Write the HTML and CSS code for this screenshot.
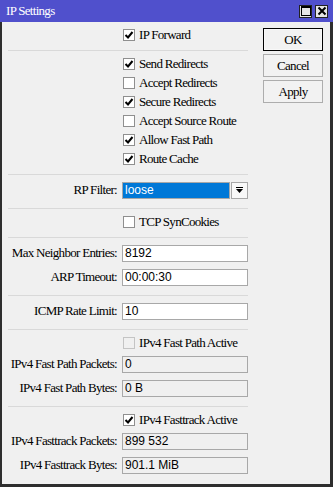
FILE: index.html
```html
<!DOCTYPE html>
<html>
<head>
<meta charset="utf-8">
<link rel="stylesheet" href="styles.css">
</head>
<body>
<div class="window">
  <div class="titlebar">
    <span class="title">IP Settings</span>
    <div class="tb-buttons">
      <span class="tb-btn"><svg width="10" height="10" viewBox="0 0 10 10"><rect x="0.5" y="0.5" width="9" height="9" fill="none" stroke="#000" stroke-width="1"/><rect x="0" y="0" width="10" height="2" fill="#000"/></svg></span>
      <span class="tb-btn"><svg width="10" height="10" viewBox="0 0 10 10"><path d="M1.5 1.5 L8.5 8.5 M8.5 1.5 L1.5 8.5" stroke="#000" stroke-width="2"/></svg></span>
    </div>
  </div>
  <div class="body">
    <div class="form">
      <div class="row cbrow"><span></span><span class="cb"><span class="box"><svg width="10" height="10" viewBox="0 0 10 10"><path d="M1.5 5 L4 7.5 L8.5 2" fill="none" stroke="#000" stroke-width="2"/></svg></span>IP Forward</span></div>
      <div class="sep"></div>
      <div class="row cbrow"><span></span><span class="cb"><span class="box"><svg width="10" height="10" viewBox="0 0 10 10"><path d="M1.5 5 L4 7.5 L8.5 2" fill="none" stroke="#000" stroke-width="2"/></svg></span>Send Redirects</span></div>
      <div class="row cbrow"><span></span><span class="cb"><span class="box"></span>Accept Redirects</span></div>
      <div class="row cbrow"><span></span><span class="cb"><span class="box"><svg width="10" height="10" viewBox="0 0 10 10"><path d="M1.5 5 L4 7.5 L8.5 2" fill="none" stroke="#000" stroke-width="2"/></svg></span>Secure Redirects</span></div>
      <div class="row cbrow"><span></span><span class="cb"><span class="box"></span>Accept Source Route</span></div>
      <div class="row cbrow"><span></span><span class="cb"><span class="box"><svg width="10" height="10" viewBox="0 0 10 10"><path d="M1.5 5 L4 7.5 L8.5 2" fill="none" stroke="#000" stroke-width="2"/></svg></span>Allow Fast Path</span></div>
      <div class="row cbrow"><span></span><span class="cb"><span class="box"><svg width="10" height="10" viewBox="0 0 10 10"><path d="M1.5 5 L4 7.5 L8.5 2" fill="none" stroke="#000" stroke-width="2"/></svg></span>Route Cache</span></div>
      <div class="sep"></div>
      <div class="row frow"><span class="lbl">RP Filter:</span>
        <span class="selectwrap"><span class="select">loose</span><span class="dd"><svg width="9" height="8" viewBox="0 0 9 8"><rect x="1" y="1" width="7" height="1" fill="#000"/><path d="M1 3 L8 3 L4.5 7 Z" fill="#000"/></svg></span></span>
      </div>
      <div class="sep"></div>
      <div class="row cbrow"><span></span><span class="cb"><span class="box"></span>TCP SynCookies</span></div>
      <div class="sep"></div>
      <div class="row frow"><span class="lbl">Max Neighbor Entries:</span><span class="field">8192</span></div>
      <div class="row frow"><span class="lbl">ARP Timeout:</span><span class="field">00:00:30</span></div>
      <div class="sep"></div>
      <div class="row frow"><span class="lbl">ICMP Rate Limit:</span><span class="field">10</span></div>
      <div class="sep"></div>
      <div class="row cbrow"><span></span><span class="cb"><span class="box dis"></span>IPv4 Fast Path Active</span></div>
      <div class="row frow"><span class="lbl">IPv4 Fast Path Packets:</span><span class="field ro">0</span></div>
      <div class="row frow"><span class="lbl">IPv4 Fast Path Bytes:</span><span class="field ro">0 B</span></div>
      <div class="sep"></div>
      <div class="row cbrow"><span></span><span class="cb"><span class="box"><svg width="10" height="10" viewBox="0 0 10 10"><path d="M1.5 5 L4 7.5 L8.5 2" fill="none" stroke="#000" stroke-width="2"/></svg></span>IPv4 Fasttrack Active</span></div>
      <div class="row frow"><span class="lbl">IPv4 Fasttrack Packets:</span><span class="field ro">899 532</span></div>
      <div class="row frow"><span class="lbl">IPv4 Fasttrack Bytes:</span><span class="field ro">901.1 MiB</span></div>
    </div>
    <div class="buttons">
      <span class="btn default">OK</span>
      <span class="btn">Cancel</span>
      <span class="btn">Apply</span>
    </div>
  </div>
</div>
</body>
</html>
```

FILE: styles.css
```css
html, body {
  margin: 0;
  padding: 0;
  background: #f0f0f0;
}
.window {
  width: 333px;
  height: 487px;
  display: flex;
  flex-direction: column;
  font-family: "Liberation Serif", serif;
  font-size: 13px;
  letter-spacing: -0.7px;
  color: #000;
}
.titlebar {
  height: 22px;
  flex: none;
  background: #5050cc;
  display: flex;
  align-items: center;
  justify-content: space-between;
  padding: 0 5px 0 6px;
}
.title {
  color: #fff;
  font-size: 13px;
}
.tb-buttons {
  display: flex;
  gap: 3px;
}
.tb-btn {
  width: 13px;
  height: 13px;
  background: #e6e6e6;
  border: 1px solid #222;
  display: flex;
  align-items: center;
  justify-content: center;
  box-sizing: border-box;
}
.tb-btn svg { display: block; }
.body {
  flex: 1;
  display: flex;
  background: #f0f0f0;
  border-left: 2px solid #2e2e2e;
  border-right: 3px solid #2e2e2e;
  border-bottom: 3px solid #2e2e2e;
  padding-top: 3px;
}
.form {
  width: 246px;
  display: flex;
  flex-direction: column;
}
.row {
  display: grid;
  grid-template-columns: 115px 126px;
  column-gap: 5px;
  align-items: center;
}
.cbrow { height: 19px; }
.frow { height: 24px; }
.lbl {
  text-align: right;
  white-space: nowrap;
}
.cb {
  display: flex;
  align-items: center;
  gap: 4px;
  padding-left: 1px;
  white-space: nowrap;
}
.box {
  width: 12px;
  height: 12px;
  box-sizing: border-box;
  border: 1px solid #8f8f8f;
  background: #fff;
  display: flex;
  align-items: center;
  justify-content: center;
  flex: none;
}
.box.dis {
  border-color: #c4c4c4;
  background: #f0f0f0;
}
.box svg { display: block; }
.sep {
  height: 1px;
  background: #d9d9d9;
  margin: 6px 0 3px 6px;
  width: 240px;
}
.field {
  height: 17px;
  box-sizing: border-box;
  border: 1px solid #a8a8a8;
  background: #fff;
  font-family: "Liberation Sans", sans-serif;
  font-size: 12px;
  letter-spacing: 0;
  line-height: 15px;
  padding-left: 2px;
  white-space: nowrap;
}
.field.ro {
  background: #f0f0f0;
}
.selectwrap {
  display: flex;
  gap: 1px;
}
.select {
  flex: 1;
  height: 17px;
  box-sizing: border-box;
  border: 1px solid #a8a8a8;
  background: #0078d7;
  color: #fff;
  font-family: "Liberation Sans", sans-serif;
  font-size: 12px;
  letter-spacing: 0;
  line-height: 15px;
  padding-left: 2px;
}
.dd {
  width: 17px;
  height: 17px;
  box-sizing: border-box;
  border: 1px solid #a8a8a8;
  background: #f8f8f8;
  display: flex;
  align-items: center;
  justify-content: center;
}
.dd svg { display: block; }
.buttons {
  margin-left: 15px;
  margin-top: 3px;
  display: flex;
  flex-direction: column;
  gap: 3px;
}
.btn {
  width: 60px;
  height: 23px;
  box-sizing: border-box;
  border: 1px solid #adadad;
  background: #f2f2f2;
  display: flex;
  align-items: center;
  justify-content: center;
}
.btn.default {
  border: 1px solid #000;
  box-shadow: inset 0 0 0 1px #f8f8f8;
}
```
